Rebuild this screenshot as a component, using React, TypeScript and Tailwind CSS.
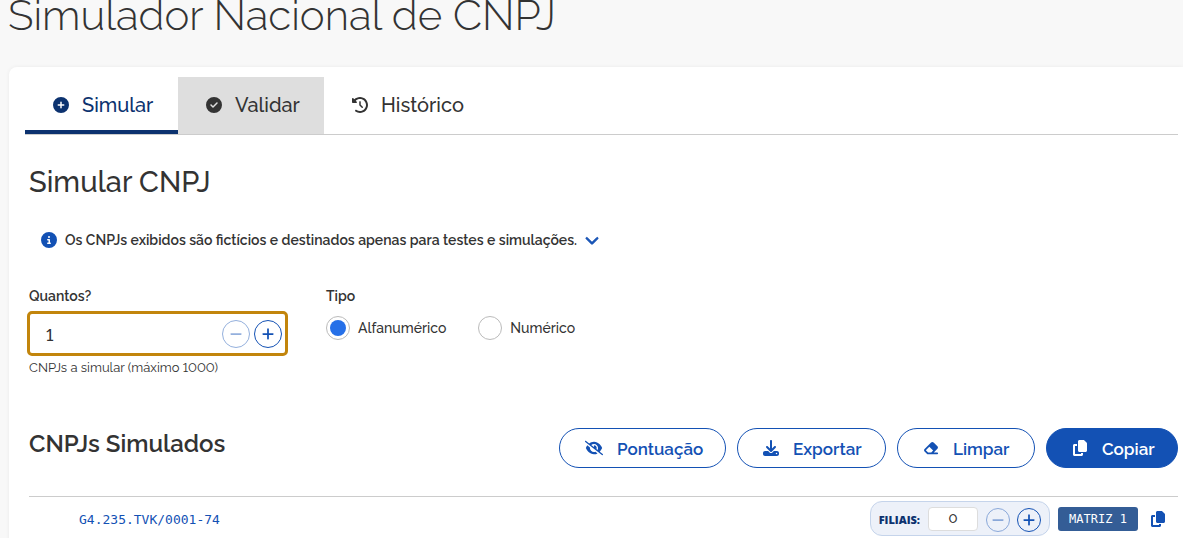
import { useState } from "react";
import type { ReactNode } from "react";
import {
  FaCircleCheck,
  FaCircleInfo,
  FaCirclePlus,
  FaClockRotateLeft,
  FaChevronDown,
  FaCopy,
  FaDownload,
  FaEraser,
  FaEyeSlash,
  FaMinus,
  FaPlus,
} from "react-icons/fa6";

function Tab({ icon, label, className }: { icon: ReactNode; label: string; className: string }) {
  return (
    <button type="button" role="tab" className={`flex h-[57px] items-center gap-[13px] border-b-4 pt-[2px] pl-7 text-[20px] leading-7 font-medium ${className}`}>
      {icon}
      {label}
    </button>
  );
}

function Stepper({ label, disabled, size, onClick, children }: { label: string; disabled?: boolean; size: string; onClick: () => void; children: ReactNode }) {
  return (
    <button
      type="button"
      aria-label={label}
      disabled={disabled}
      onClick={onClick}
      className={`flex shrink-0 items-center justify-center rounded-full border border-[#1351b4] text-[#1351b4] disabled:opacity-45 ${size}`}
    >
      {children}
    </button>
  );
}

function Action({ icon, label, className }: { icon: ReactNode; label: string; className: string }) {
  return (
    <button type="button" className={`flex h-10 items-center gap-[14px] rounded-full border border-[#1351b4] pl-[25px] text-[17px] font-semibold ${className}`}>
      {icon}
      <span className="pt-[3px]">{label}</span>
    </button>
  );
}

function Radio({ value, label, checked, onChange }: { value: string; label: string; checked: boolean; onChange: () => void }) {
  return (
    <label className="flex items-center gap-2 text-[14px] font-medium">
      <input
        type="radio"
        name="tipo"
        value={value}
        checked={checked}
        onChange={onChange}
        className="size-6 appearance-none rounded-full border border-[#bbb] bg-white bg-clip-content p-[3px] checked:bg-[#2670e8]"
      />
      {label}
    </label>
  );
}

export default function App() {
  const [amount, setAmount] = useState(1);
  const [branches, setBranches] = useState(0);
  const [kind, setKind] = useState("alfa");

  return (
    <div className="h-screen overflow-hidden bg-[#f8f8f8] font-['Raleway','Lato',sans-serif] text-[#333]">
      <h1 className="pl-2 text-[42px] leading-8 font-light">Simulador Nacional de CNPJ</h1>
      <main className="mt-[35px] ml-[9px] min-h-screen rounded-tl-lg bg-white pt-[10px] pr-[5px] pl-4 shadow-[0_0_4px_rgba(0,0,0,0.06)]">
        <div role="tablist" className="flex border-b border-[#ccc]">
          <Tab icon={<FaCirclePlus className="size-4" />} label="Simular" className="w-[153px] border-[#0c326f] text-[#0c326f]" />
          <Tab icon={<FaCircleCheck className="size-4" />} label="Validar" className="w-[146px] border-[#dedede] bg-[#dedede]" />
          <Tab icon={<FaClockRotateLeft className="size-4" />} label="Histórico" className="border-transparent" />
        </div>

        <div className="pl-1">
          <h2 className="mt-[27px] text-[29px] leading-10 font-medium">Simular CNPJ</h2>

          <button type="button" className="mt-[26px] ml-3 flex h-6 items-center gap-2 text-[14px] font-semibold">
            <FaCircleInfo className="size-4 text-[#1351b4]" />
            Os CNPJs exibidos são fictícios e destinados apenas para testes e simulações.
            <FaChevronDown className="size-[14px] stroke-[#1351b4] stroke-[30px] text-[#1351b4]" />
          </button>

          <div className="mt-8 flex gap-10">
            <div className="w-[257px]">
              <label htmlFor="quantos" className="block text-[14px] leading-6 font-semibold">Quantos?</label>
              <div className="mt-[5px] flex h-[41px] items-center gap-1 rounded-[3px] pr-1 pl-[17px] outline-3 outline-offset-[-1px] outline-[#c2850c]">
                <input
                  id="quantos"
                  inputMode="numeric"
                  value={amount}
                  onChange={(e) => setAmount(Number(e.target.value) || 1)}
                  className="min-w-0 flex-1 bg-transparent pt-1 text-[17px] font-medium lining-nums outline-none"
                />
                <Stepper label="Diminuir quantidade" disabled={amount <= 1} size="size-7" onClick={() => setAmount(amount - 1)}>
                  <FaMinus className="size-[14px]" />
                </Stepper>
                <Stepper label="Aumentar quantidade" size="size-7" onClick={() => setAmount(amount + 1)}>
                  <FaPlus className="size-[14px]" />
                </Stepper>
              </div>
              <p className="mt-1 text-[13px] leading-5 lining-nums">CNPJs a simular (máximo 1000)</p>
            </div>
            <fieldset>
              <legend className="text-[14px] leading-6 font-semibold">Tipo</legend>
              <div className="mt-2 flex gap-8">
                <Radio value="alfa" label="Alfanumérico" checked={kind === "alfa"} onChange={() => setKind("alfa")} />
                <Radio value="num" label="Numérico" checked={kind === "num"} onChange={() => setKind("num")} />
              </div>
            </fieldset>
          </div>

          <div className="mt-[50px] flex justify-between">
            <h3 className="text-2xl font-semibold">CNPJs Simulados</h3>
            <div className="flex gap-[11px]">
              <Action icon={<FaEyeSlash className="size-[18px]" />} label="Pontuação" className="w-[167px] text-[#1351b4]" />
              <Action icon={<FaDownload className="size-4" />} label="Exportar" className="w-[149px] text-[#1351b4]" />
              <Action icon={<FaEraser className="size-4" />} label="Limpar" className="w-[138px] text-[#1351b4]" />
              <Action icon={<FaCopy className="size-4" />} label="Copiar" className="w-[132px] bg-[#1351b4] text-white" />
            </div>
          </div>

          <div className="mt-7 flex items-center border-t border-[#ccc] pt-1 pl-[50px]">
            <a href="#cnpj" className="pt-[3px] font-['DejaVu_Sans_Mono',monospace] text-[13px] text-[#1351b4]">G4.235.TVK/0001-74</a>
            <div className="ml-auto flex h-[35px] items-center rounded-xl border border-[#c5d4eb] bg-[#edf1f9] px-2">
              <label htmlFor="filiais" className="pt-1 font-['Open_Sans',sans-serif] text-[11px] font-extrabold text-[#0c326f]">FILIAIS:</label>
              <input
                id="filiais"
                inputMode="numeric"
                value={branches}
                onChange={(e) => setBranches(Number(e.target.value) || 0)}
                className="mr-2 ml-2 h-6 w-[50px] rounded border border-[#ddd] bg-white text-center text-[13px] font-medium lining-nums outline-none"
              />
              <div className="flex gap-[7px] pt-[2px]">
                <Stepper label="Diminuir filiais" disabled={branches <= 0} size="size-6" onClick={() => setBranches(branches - 1)}>
                  <FaMinus className="size-[14px]" />
                </Stepper>
                <Stepper label="Aumentar filiais" size="size-6" onClick={() => setBranches(branches + 1)}>
                  <FaPlus className="size-[14px]" />
                </Stepper>
              </div>
            </div>
            <span className="ml-2 flex h-6 w-20 items-center justify-center rounded-[3px] bg-[#345d96] font-['DejaVu_Sans_Mono',monospace] text-[12px] text-white">MATRIZ 1</span>
            <button type="button" aria-label="Copiar CNPJ" className="mr-3 ml-3 text-[#1351b4]">
              <FaCopy className="size-4" />
            </button>
          </div>
        </div>
      </main>
    </div>
  );
}
